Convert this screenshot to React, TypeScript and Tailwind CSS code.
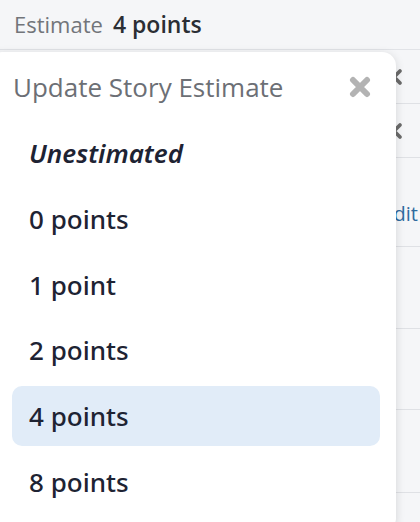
import { useState } from "react";

const options = [
  { label: "Unestimated", value: null as number | null },
  { label: "0 points", value: 0 },
  { label: "1 point", value: 1 },
  { label: "2 points", value: 2 },
  { label: "4 points", value: 4 },
  { label: "8 points", value: 8 },
];

function ChevronLeft() {
  return (
    <svg width="18" height="18" viewBox="0 0 24 24" fill="none">
      <path d="M16 4 L8 12 L16 20" stroke="#6b6b6b" strokeWidth="5" strokeLinecap="round" strokeLinejoin="round" />
    </svg>
  );
}

function CloseIcon() {
  return (
    <svg width="22" height="22" viewBox="0 0 22 22" fill="none">
      <path d="M4 4 L18 18 M18 4 L4 18" stroke="#b3b3b3" strokeWidth="6" strokeLinecap="round" />
    </svg>
  );
}

export default function App() {
  const [estimate, setEstimate] = useState<number | null>(4);
  const current = options.find((o) => o.value === estimate);

  return (
    <div className="relative w-[420px] h-[522px] overflow-hidden bg-[#f5f6f8] font-['Open_Sans',sans-serif]">
      {/* Header */}
      <div className="h-[50px] flex items-center gap-[10px] px-[14px] border-b border-[#e1e3e7]">
        <span className="text-[22px] text-[#72757a]">Estimate</span>
        <span className="text-[23px] font-semibold text-[#2b2e34]">{current?.label}</span>
      </div>

      {/* Rows behind the popover */}
      <div className="flex flex-col">
        <div className="h-[54px] flex items-center justify-end pr-[14px] border-b border-[#dfe1e5]">
          <ChevronLeft />
        </div>
        <div className="h-[54px] flex items-center justify-end pr-[14px] border-b border-[#dfe1e5]">
          <ChevronLeft />
        </div>
        <div className="h-[89px] flex items-start justify-end pr-[2px] pt-[42px] border-b border-[#dfe1e5]">
          <span className="text-[20px] leading-[28px] text-[#2f6b9f]">Edit</span>
        </div>
        <div className="h-[82px] border-b border-[#dfe1e5]" />
        <div className="h-[81px] border-b border-[#dfe1e5]" />
        <div className="h-[83px] border-b border-[#dfe1e5]" />
      </div>

      {/* Popover */}
      <div className="absolute left-[-12px] top-[52px] w-[408px] h-[480px] rounded-[14px] bg-white shadow-[0_2px_10px_rgba(0,0,0,0.14)] pt-[17px] pl-[24px] pr-[16px]">
        <div className="flex items-center justify-between pl-[1px] pr-[9px]">
          <h2 className="text-[26px] leading-[36px] text-[#6c6f75]">Update Story Estimate</h2>
          <button className="flex items-center justify-center">
            <CloseIcon />
          </button>
        </div>
        <ul className="mt-[18px] flex flex-col gap-[5.8px]">
          {options.map((o) => (
            <li key={o.label}>
              <button
                onClick={() => setEstimate(o.value)}
                className={
                  "w-full h-[60px] px-[17px] rounded-[10px] text-left text-[26px] leading-[60px] font-['Noto_Sans',sans-serif] font-medium text-[#1e2333] " +
                  (o.value === estimate ? "bg-[#e1ecf8]" : "") +
                  (o.value === null ? " italic font-semibold" : "")
                }
              >
                {o.label}
              </button>
            </li>
          ))}
        </ul>
      </div>
    </div>
  );
}
